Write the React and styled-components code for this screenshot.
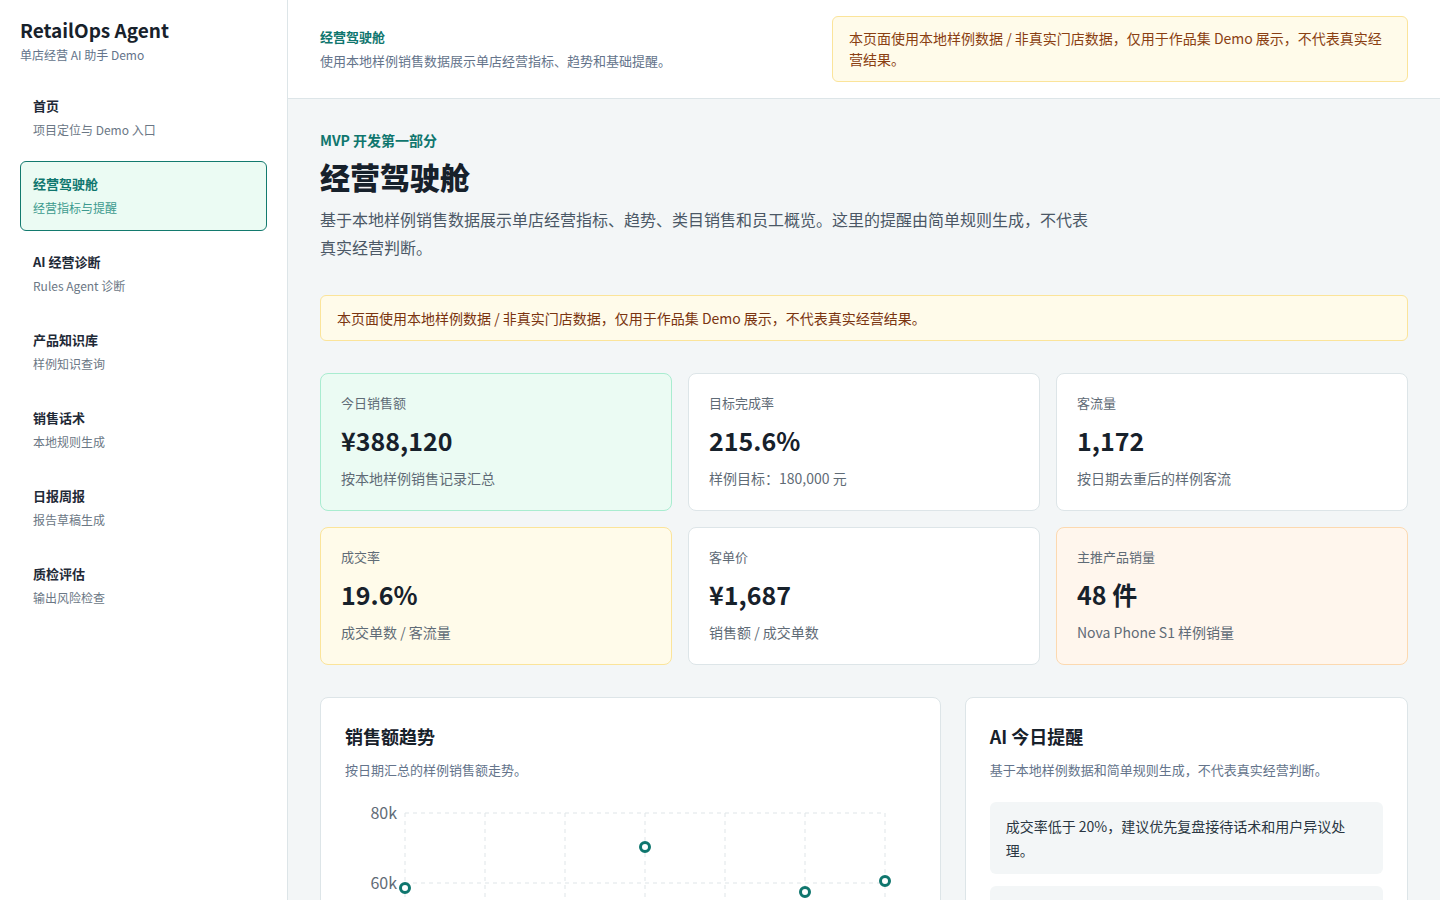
import React from "react";
import { styled, createGlobalStyle } from "styled-components";

const GlobalStyle = createGlobalStyle`
  * { box-sizing: border-box; }
  body {
    margin: 0;
    font-family: "Noto Sans CJK SC", "Noto Sans", sans-serif;
    color: #17212b;
    background: #f3f6f7;
  }
`;

const navItems = [
  { title: "首页", sub: "项目定位与 Demo 入口" },
  { title: "经营驾驶舱", sub: "经营指标与提醒", active: true },
  { title: "AI 经营诊断", sub: "Rules Agent 诊断" },
  { title: "产品知识库", sub: "样例知识查询" },
  { title: "销售话术", sub: "本地规则生成" },
  { title: "日报周报", sub: "报告草稿生成" },
  { title: "质检评估", sub: "输出风险检查" },
];

const metrics = [
  { label: "今日销售额", value: "¥388,120", note: "按本地样例销售记录汇总", tone: "green" },
  { label: "目标完成率", value: "215.6%", note: "样例目标：180,000 元" },
  { label: "客流量", value: "1,172", note: "按日期去重后的样例客流" },
  { label: "成交率", value: "19.6%", note: "成交单数 / 客流量", tone: "yellow" },
  { label: "客单价", value: "¥1,687", note: "销售额 / 成交单数" },
  { label: "主推产品销量", value: "48 件", note: "Nova Phone S1 样例销量", tone: "orange" },
];

const tones = {
  green: { bg: "#ebfbf3", border: "#a9ecd0" },
  yellow: { bg: "#fffbea", border: "#fbe49a" },
  orange: { bg: "#fff6ed", border: "#fcd9b0" },
  plain: { bg: "#ffffff", border: "#dde5e8" },
};

// 样例日销售额（千元）
const trend = [58.6, 52, 46, 70.3, 44, 57.4, 60.6];

const App = () => {
  const yOf = (v) => 13 + (80 - v) * 3.5;
  return (
    <>
      <GlobalStyle />
      <Layout>
        <Sidebar>
          <Brand>RetailOps Agent</Brand>
          <BrandSub>单店经营 AI 助手 Demo</BrandSub>
          <Nav>
            {navItems.map((item) => (
              <NavItem key={item.title} $active={item.active}>
                <NavTitle $active={item.active}>{item.title}</NavTitle>
                <NavSub $active={item.active}>{item.sub}</NavSub>
              </NavItem>
            ))}
          </Nav>
        </Sidebar>

        <Main>
          <TopBar>
            <TopText>
              <TopTitle>经营驾驶舱</TopTitle>
              <TopSub>使用本地样例销售数据展示单店经营指标、趋势和基础提醒。</TopSub>
            </TopText>
            <TopNotice>
              本页面使用本地样例数据 / 非真实门店数据，仅用于作品集 Demo 展示，不代表真实经营结果。
            </TopNotice>
          </TopBar>

          <Content>
            <Eyebrow>MVP 开发第一部分</Eyebrow>
            <PageTitle>经营驾驶舱</PageTitle>
            <Lead>
              基于本地样例销售数据展示单店经营指标、趋势、类目销售和员工概览。这里的提醒由简单规则生成，不代表真实经营判断。
            </Lead>
            <Notice>
              本页面使用本地样例数据 / 非真实门店数据，仅用于作品集 Demo 展示，不代表真实经营结果。
            </Notice>

            <MetricGrid>
              {metrics.map((m) => (
                <MetricCard key={m.label} $tone={m.tone || "plain"}>
                  <MetricLabel>{m.label}</MetricLabel>
                  <MetricValue>{m.value}</MetricValue>
                  <MetricNote>{m.note}</MetricNote>
                </MetricCard>
              ))}
            </MetricGrid>

            <BottomGrid>
              <Panel>
                <PanelTitle>销售额趋势</PanelTitle>
                <PanelSub>按日期汇总的样例销售额走势。</PanelSub>
                <Chart width="570" height="320" viewBox="0 0 570 320">
                  {[80, 60, 40, 20].map((v) => (
                    <g key={v}>
                      <line
                        x1="60"
                        x2="540"
                        y1={yOf(v)}
                        y2={yOf(v)}
                        stroke="#dfe5e8"
                        strokeDasharray="4 4"
                      />
                      <text
                        x="52"
                        y={yOf(v) + 6}
                        textAnchor="end"
                        fontSize="16"
                        fill="#5f6b76"
                      >
                        {v}k
                      </text>
                    </g>
                  ))}
                  {trend.map((_, i) => (
                    <line
                      key={i}
                      x1={60 + i * 80}
                      x2={60 + i * 80}
                      y1="13"
                      y2="300"
                      stroke="#dfe5e8"
                      strokeDasharray="4 4"
                    />
                  ))}
                  {trend.map((v, i) => (
                    <circle
                      key={i}
                      cx={60 + i * 80}
                      cy={yOf(v)}
                      r="4.5"
                      fill="#fff"
                      stroke="#0f766e"
                      strokeWidth="3"
                    />
                  ))}
                </Chart>
              </Panel>

              <Panel>
                <PanelTitle>AI 今日提醒</PanelTitle>
                <PanelSub>基于本地样例数据和简单规则生成，不代表真实经营判断。</PanelSub>
                <Alerts>
                  <AlertItem>成交率低于 20%，建议优先复盘接待话术和用户异议处理。</AlertItem>
                  <AlertItem>主推产品 Nova Phone S1 样例销量 48 件，可继续关注连带销售。</AlertItem>
                </Alerts>
              </Panel>
            </BottomGrid>
          </Content>
        </Main>
      </Layout>
    </>
  );
};

const Layout = styled.div`
  display: grid;
  grid-template-columns: 288px 1fr;
  min-height: 100vh;
`;

const Sidebar = styled.aside`
  background: #ffffff;
  border-right: 1px solid #dde5e8;
  padding: 18px 20px;
`;

const Brand = styled.div`
  font-size: 19px;
  font-weight: 700;
  color: #17212b;
  line-height: 24px;
`;

const BrandSub = styled.div`
  font-size: 12px;
  color: #64748b;
  margin-top: 4px;
`;

const Nav = styled.nav`
  display: flex;
  flex-direction: column;
  gap: 8px;
  margin-top: 20px;
`;

const NavItem = styled.div`
  height: 70px;
  padding: 12px 12px;
  border-radius: 6px;
  border: 1px solid ${(p) => (p.$active ? "#137a6e" : "transparent")};
  background: ${(p) => (p.$active ? "#ebfbf3" : "transparent")};
`;

const NavTitle = styled.div`
  font-size: 13px;
  font-weight: 700;
  line-height: 20px;
  color: ${(p) => (p.$active ? "#0f766e" : "#1f2a37")};
`;

const NavSub = styled.div`
  font-size: 12px;
  line-height: 18px;
  margin-top: 5px;
  color: ${(p) => (p.$active ? "#3c9a8e" : "#6b7785")};
`;

const Main = styled.main`
  min-width: 0;
`;

const TopBar = styled.header`
  height: 99px;
  background: #ffffff;
  border-bottom: 1px solid #dde5e8;
  display: flex;
  justify-content: space-between;
  align-items: flex-start;
  padding: 16px 32px 0 32px;
`;

const TopText = styled.div`
  padding-top: 11px;
`;

const TopTitle = styled.div`
  font-size: 13px;
  font-weight: 700;
  color: #0f766e;
  line-height: 20px;
`;

const TopSub = styled.div`
  font-size: 13px;
  color: #64748b;
  line-height: 20px;
  margin-top: 4px;
`;

const TopNotice = styled.div`
  width: 576px;
  background: #fffbea;
  border: 1px solid #fbe49a;
  border-radius: 6px;
  padding: 11px 16px;
  font-size: 14px;
  line-height: 21px;
  color: #8a3f12;
`;

const Content = styled.div`
  padding: 30px 32px 40px;
`;

const Eyebrow = styled.div`
  font-size: 14px;
  font-weight: 700;
  color: #0f766e;
  line-height: 22px;
`;

const PageTitle = styled.h1`
  margin: 5px 0 0;
  font-size: 30px;
  font-weight: 800;
  line-height: 40px;
  color: #17212b;
`;

const Lead = styled.p`
  margin: 9px 0 0;
  max-width: 780px;
  font-size: 16px;
  line-height: 28px;
  color: #4b5866;
`;

const Notice = styled.div`
  margin-top: 34px;
  height: 46px;
  display: flex;
  align-items: center;
  padding: 0 16px;
  background: #fffbea;
  border: 1px solid #fbe49a;
  border-radius: 6px;
  font-size: 14px;
  color: #7a3410;
`;

const MetricGrid = styled.div`
  display: grid;
  grid-template-columns: repeat(3, 1fr);
  gap: 16px;
  margin-top: 32px;
`;

const MetricCard = styled.div`
  height: 138px;
  padding: 19px 20px;
  border-radius: 8px;
  background: ${(p) => tones[p.$tone].bg};
  border: 1px solid ${(p) => tones[p.$tone].border};
`;

const MetricLabel = styled.div`
  font-size: 13px;
  color: #5f6b76;
  line-height: 20px;
`;

const MetricValue = styled.div`
  margin-top: 9px;
  font-size: 25px;
  font-weight: 700;
  line-height: 36px;
  color: #17212b;
`;

const MetricNote = styled.div`
  margin-top: 10px;
  font-size: 14px;
  line-height: 20px;
  color: #5f6b76;
`;

const BottomGrid = styled.div`
  display: grid;
  grid-template-columns: 1.4fr 1fr;
  gap: 24px;
  margin-top: 32px;
  align-items: start;
`;

const Panel = styled.section`
  background: #ffffff;
  border: 1px solid #dde5e8;
  border-radius: 8px;
  padding: 24px;
`;

const PanelTitle = styled.h2`
  margin: 0;
  font-size: 18px;
  font-weight: 700;
  line-height: 28px;
  color: #17212b;
`;

const PanelSub = styled.p`
  margin: 10px 0 0;
  font-size: 13px;
  line-height: 20px;
  color: #64748b;
`;

const Chart = styled.svg`
  display: block;
  margin-top: 20px;
  font-family: "Noto Sans CJK SC", sans-serif;
`;

const Alerts = styled.div`
  display: flex;
  flex-direction: column;
  gap: 12px;
  margin-top: 22px;
`;

const AlertItem = styled.div`
  background: #f3f6f7;
  border-radius: 6px;
  padding: 12px 16px;
  font-size: 14px;
  line-height: 24px;
  color: #2a3642;
  padding-right: 32px;
`;

export default App;
